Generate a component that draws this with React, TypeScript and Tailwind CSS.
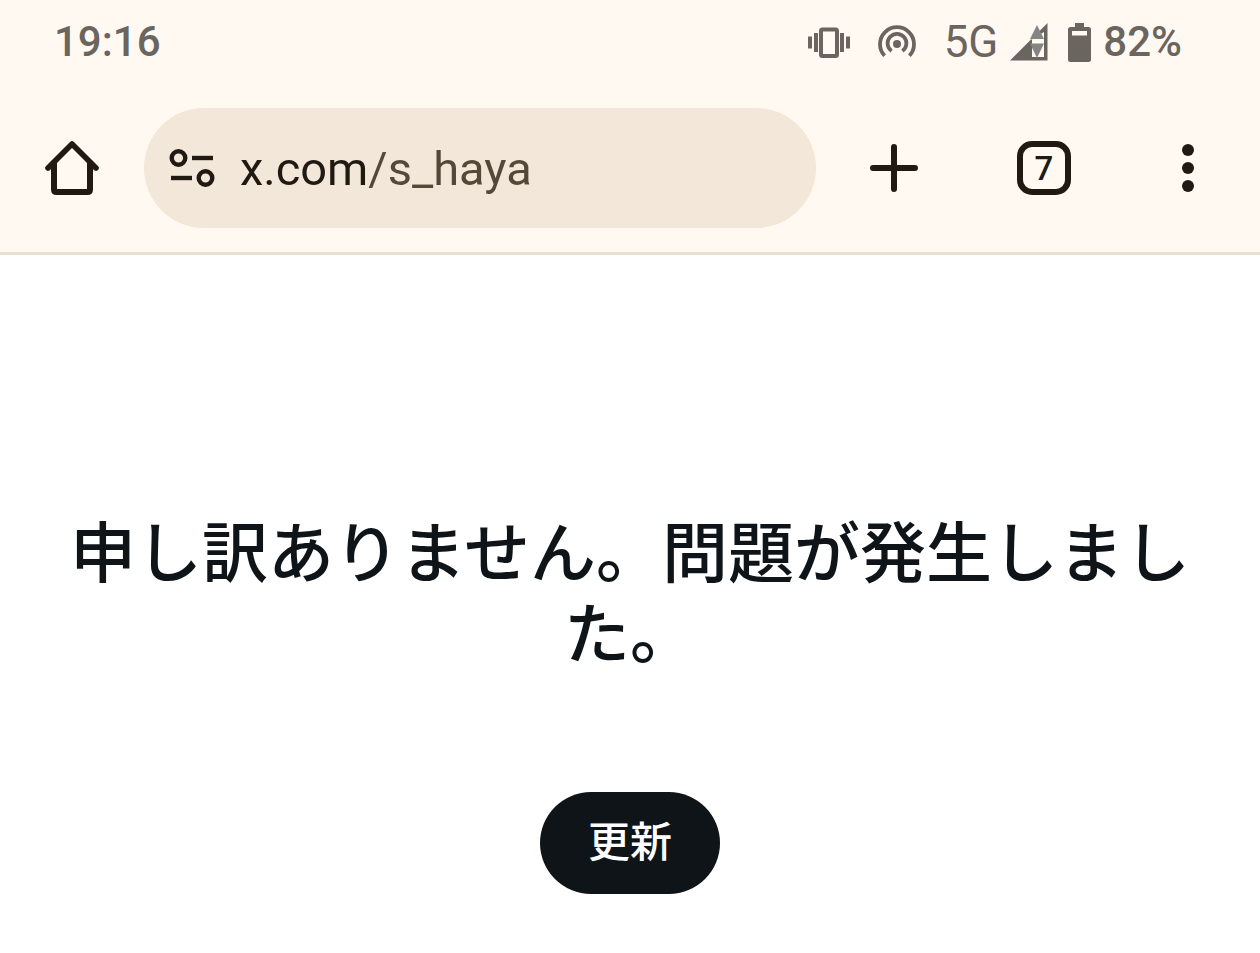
import { useState } from "react";

function VibrateIcon() {
  return (
    <svg width="42" height="32" viewBox="0 0 42 32" fill="currentColor" aria-hidden="true">
      <rect x="0" y="10.500" width="4" height="12" />
      <rect x="6" y="7" width="4" height="19" />
      <rect x="32" y="7" width="4" height="19" />
      <rect x="38" y="10.500" width="4" height="12" />
      <rect x="13" y="3.500" width="16" height="26.500" rx="1.500" fill="none" stroke="currentColor" strokeWidth="4" />
    </svg>
  );
}

function HotspotIcon() {
  return (
    <svg width="38" height="34" viewBox="0 0 38 34" fill="none" stroke="currentColor" strokeWidth="3.8" aria-hidden="true">
      <circle cx="19" cy="19" r="4" fill="currentColor" stroke="none" />
      <path d="M13.6 26A9.400 9.400 0 1 1 24.400 26" />
      <path d="M6.600 30.800A17 17 0 1 1 31.400 30.800" />
    </svg>
  );
}

function SignalIcon() {
  return (
    <svg width="38" height="38" viewBox="0 0 38 38" aria-hidden="true">
      <path d="M37.5 0V37.5H0Z" fill="#6a655f" />
      <path d="M34 9V34H22V17H21Z" fill="#fff9f2" />
      <path d="M27 2L34 16H20Z" fill="#858585" />
      <path d="M20 20.500H34L27 35Z" fill="#858585" />
    </svg>
  );
}

function BatteryIcon() {
  return (
    <svg width="23" height="39" viewBox="0 0 23 39" aria-hidden="true">
      <path
        d="M7 0h9v4h4.500a2.500 2.500 0 0 1 2.500 2.500v30a2.500 2.500 0 0 1-2.500 2.500h-18a2.500 2.500 0 0 1-2.500-2.500v-30a2.500 2.500 0 0 1 2.500-2.500h4.500z"
        fill="currentColor"
      />
      <rect x="4" y="8" width="15" height="4.500" fill="#fff9f2" />
    </svg>
  );
}

function HomeIcon() {
  return (
    <svg width="54" height="54" viewBox="0 0 54 54" fill="none" stroke="currentColor" strokeWidth="6" strokeLinecap="round" strokeLinejoin="round" aria-hidden="true">
      <path d="M3 27L27 3L51 27" strokeWidth="5.600" />
      <path d="M9 22V48.500Q9 51 11.500 51H42.500Q45 51 45 48.500V22" />
    </svg>
  );
}

function SiteSettingsIcon() {
  return (
    <svg width="46" height="40" viewBox="0 0 46 40" fill="none" stroke="currentColor" strokeWidth="4.400" aria-hidden="true">
      <circle cx="9.500" cy="10" r="6.800" />
      <path d="M23 10H44" />
      <path d="M2 30H23" />
      <circle cx="36.500" cy="30" r="6.800" />
    </svg>
  );
}

function PlusIcon() {
  return (
    <svg width="48" height="48" viewBox="0 0 48 48" stroke="currentColor" strokeWidth="6" strokeLinecap="round" aria-hidden="true">
      <path d="M24 3V45M3 24H45" />
    </svg>
  );
}

function MoreIcon() {
  return (
    <svg width="12" height="48" viewBox="0 0 12 48" fill="currentColor" aria-hidden="true">
      <circle cx="6" cy="6" r="6" />
      <circle cx="6" cy="24" r="6" />
      <circle cx="6" cy="42" r="6" />
    </svg>
  );
}

function StatusBar() {
  return (
    <div className="flex h-[84px] items-center justify-between pr-[78px] pl-[54px] font-[Roboto,sans-serif] text-[42px] leading-none font-medium text-[#6a655f]">
      <time>19:16</time>
      <div className="flex items-center gap-7">
        <VibrateIcon />
        <HotspotIcon />
        <div className="flex items-center gap-5">
          <div className="flex items-center gap-3">
            <span className="text-[44px] font-normal">5G</span>
            <SignalIcon />
          </div>
          <div className="flex items-center gap-3">
            <BatteryIcon />
            <span>82%</span>
          </div>
        </div>
      </div>
    </div>
  );
}

function Toolbar() {
  const [url, setUrl] = useState("x.com/s_haya");
  return (
    <div className="flex items-center py-6 text-[#211a13]">
      <button type="button" aria-label="ホーム" className="flex h-[120px] w-36 shrink-0 items-center justify-center">
        <HomeIcon />
      </button>
      <label className="flex h-[120px] min-w-0 flex-1 items-center gap-[25px] rounded-full bg-[#f3e7d9] px-[25px]">
        <SiteSettingsIcon />
        <input
          type="text"
          aria-label="アドレス"
          value={url}
          onChange={(event) => setUrl(event.target.value)}
          className="h-[72px] min-w-0 flex-1 bg-[linear-gradient(90deg,#211a13_128px,#534939_128px)] bg-clip-text font-[Roboto,sans-serif] text-[47px] text-transparent caret-[#211a13] outline-none"
        />
      </label>
      <button type="button" aria-label="新しいタブ" className="flex h-[120px] w-[156px] shrink-0 items-center justify-center">
        <PlusIcon />
      </button>
      <button type="button" aria-label="タブを切り替え" className="flex h-[120px] w-36 shrink-0 items-center justify-center">
        <span className="flex size-[54px] items-center justify-center rounded-[15px] border-6 border-current font-[Roboto,sans-serif] text-[33px] leading-none font-medium">
          7
        </span>
      </button>
      <button type="button" aria-label="メニュー" className="flex h-[120px] w-36 shrink-0 items-center justify-center">
        <MoreIcon />
      </button>
    </div>
  );
}

export default function App() {
  return (
    <div className="flex min-h-screen flex-col bg-white font-['Noto_Sans_CJK_JP',sans-serif]">
      <header className="border-b-3 border-[#ebdfd0] bg-[#fff9f2]">
        <StatusBar />
        <Toolbar />
      </header>
      <main className="flex flex-col items-center px-[60px] pt-[253px] pb-[59px] text-[#0f1419]">
        <h1 className="text-center text-[66px] leading-[81px] font-medium">申し訳ありません。問題が発生しました。</h1>
        <button
          type="button"
          className="mt-[122px] flex h-[102px] items-center justify-center rounded-full bg-[#0f1419] px-12 pb-2 text-[42px] leading-none font-medium text-white"
        >
          更新
        </button>
      </main>
    </div>
  );
}
